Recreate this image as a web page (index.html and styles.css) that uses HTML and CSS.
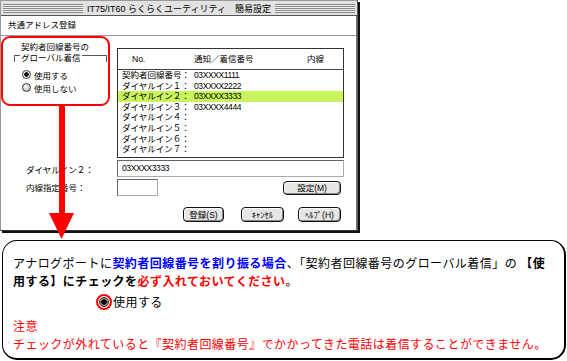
FILE: index.html
```html
<!DOCTYPE html>
<html>
<head>
    <title>IT75/IT60 簡易設定</title>
    <link rel="stylesheet" href="styles.css">
</head>
<body>
<div class="page">
    <div class="window">
        <div class="titlebar">
            <span class="stripes"></span>
            <span class="title">IT75/IT60 らくらくユーティリティ　簡易設定</span>
            <span class="stripes"></span>
        </div>
        <div class="client">
            <div class="heading">共通アドレス登録</div>
            <div class="panel">
                <!-- annotated group (red frame) -->
                <div class="mark-box">
                    <div class="caption">契約者回線番号の</div>
                    <div class="group-head">
                        <span class="tick-left"></span>
                        <span class="legend">グローバル着信</span>
                        <span class="tick-right"></span>
                    </div>
                    <div class="radios">
                        <div class="radio-row"><span class="radio on"></span>使用する</div>
                        <div class="radio-row"><span class="radio"></span>使用しない</div>
                    </div>
                </div>

                <div class="list">
                    <div class="list-head">
                        <span class="col-no">No.</span>
                        <span class="col-num">通知／着信番号</span>
                        <span>内線</span>
                    </div>
                    <div class="list-rows">
                        <div class="list-row"><span class="col-name">契約者回線番号：</span><span class="num">03XXXX1111</span></div>
                        <div class="list-row"><span class="col-name">ダイヤルイン１：</span><span class="num">03XXXX2222</span></div>
                        <div class="list-row selected"><span class="col-name">ダイヤルイン２：</span><span class="num">03XXXX3333</span></div>
                        <div class="list-row"><span class="col-name">ダイヤルイン３：</span><span class="num">03XXXX4444</span></div>
                        <div class="list-row"><span class="col-name">ダイヤルイン４：</span></div>
                        <div class="list-row"><span class="col-name">ダイヤルイン５：</span></div>
                        <div class="list-row"><span class="col-name">ダイヤルイン６：</span></div>
                        <div class="list-row"><span class="col-name">ダイヤルイン７：</span></div>
                    </div>
                </div>

                <div class="label label-dial">ダイヤルイン２：</div>
                <div class="field field-dial"><span class="num">03XXXX3333</span></div>

                <div class="label label-ext">内線指定番号：</div>
                <div class="ext-row">
                    <div class="field field-small"></div>
                    <button class="btn btn-set" type="button">設定(M)</button>
                </div>

                <div></div>
                <div class="buttons">
                    <button class="btn btn-ok" type="button">登録(S)</button>
                    <button class="btn btn-cancel" type="button">ｷｬﾝｾﾙ</button>
                    <button class="btn btn-help" type="button">ﾍﾙﾌﾟ(H)</button>
                </div>
            </div>
        </div>
    </div>

    <!-- red pointer from the group to the note -->
    <svg class="arrow" width="25" height="134" viewBox="0 0 25 134">
        <rect x="10" y="0" width="6" height="108" fill="#ff0000"/>
        <polygon points="0,107 25,107 12.5,133" fill="#ff0000"/>
    </svg>

    <div class="callout">
        <div class="line">アナログポートに<b class="blue">契約者回線番号を割り振る場合</b>、「契約者回線番号のグローバル着信」の <b>【使</b></div>
        <div class="line"><b>用する】にチェックを</b><b class="red">必ず入れておいてください</b>。</div>
        <div class="sample">
            <span class="ring"><span class="dot"></span></span>使用する
        </div>
        <div class="note red">注意</div>
        <div class="line red">チェックが外れていると『契約者回線番号』でかかってきた電話は着信することができません。</div>
    </div>
</div>
</body>
</html>
```

FILE: styles.css
```css
body {
    margin: 0;
    background: #fff;
    font-family: "Liberation Sans", "Noto Sans CJK JP", sans-serif;
    color: #000;
}
.page {
    position: relative;
    width: 567px;
    height: 361px;
}

/* window */
.window {
    width: 356px;
    border-left: 1px solid #999;
    border-right: 1px solid #555;
    border-bottom: 1px solid #333;
    box-shadow: 2px 2px 0 #111;
    background: #fff;
}
.titlebar {
    display: flex;
    align-items: center;
    height: 14px;
    border-top: 1px solid #999;
    border-bottom: 1px solid #555;
    background: #e2e2e2;
    padding: 0 2px;
}
.stripes {
    flex: 1;
    height: 9px;
    background: repeating-linear-gradient(to bottom, #888 0 1px, #f2f2f2 1px 2px);
}
.title {
    font-size: 9px;
    padding: 0 4px;
    white-space: nowrap;
}
.client {
    border-right: 1px solid #777;
    padding-bottom: 8px;
}
.heading {
    height: 19px;
    line-height: 19px;
    padding-left: 7px;
    font-size: 8.5px;
    border-bottom: 1px solid #999;
}
.panel {
    display: grid;
    grid-template-columns: 116px 227px;
    font-size: 8.5px;
}

/* red marked group */
.mark-box {
    box-sizing: border-box;
    width: 109px;
    height: 70px;
    border: 2px solid #ff0000;
    border-radius: 9px;
}
.caption {
    padding: 3px 0 0 18px;
    line-height: 12px;
}
.group-head {
    display: flex;
    align-items: flex-start;
    margin: -1px 1px 0 11px;
    height: 12px;
}
.tick-left, .tick-right {
    margin-top: 3px;
    height: 6px;
    border-top: 1px solid #555;
}
.tick-left {
    width: 5px;
    border-left: 1px solid #555;
}
.tick-right {
    flex: 1;
    margin-left: 2px;
    border-right: 1px solid #555;
}
.legend {
    line-height: 12px;
    padding-left: 1px;
}
.radios {
    padding: 4px 0 0 19px;
}
.radio-row {
    display: flex;
    align-items: center;
    height: 13px;
}
.radio {
    box-sizing: border-box;
    width: 9px;
    height: 9px;
    margin-right: 3px;
    border: 1px solid #333;
    border-radius: 50%;
    background: radial-gradient(circle at 35% 35%, #fff 0, #bbb 80%);
}
.radio.on {
    background: radial-gradient(circle, #000 0 2px, #fff 2.5px);
}

/* list */
.list {
    margin-top: 12px;
    height: 110px;
    box-sizing: border-box;
    border: 1px solid #333;
}
.list-head {
    display: flex;
    height: 20px;
    line-height: 20px;
    padding-left: 14px;
    border-bottom: 1px solid #444;
}
.col-no { width: 62px; }
.col-num { width: 113px; }
.list-row {
    display: flex;
    height: 10.6px;
    line-height: 10.6px;
    padding-left: 4px;
}
.list-row.selected {
    background: #c9f45c;
}
.col-name { width: 72px; }
.num {
    letter-spacing: -0.4px;
}

/* fields */
.label {
    padding-left: 25px;
    display: flex;
    align-items: center;
}
.field {
    box-sizing: border-box;
    height: 17px;
    border: 1px solid #666;
    border-right-color: #aaa;
    border-bottom-color: #aaa;
    line-height: 15px;
    padding-left: 4px;
}
.field-dial {
    margin-top: 2px;
}
.label-dial { margin-top: 2px; }
.ext-row {
    display: flex;
    align-items: center;
    margin-top: 2px;
}
.field-small {
    width: 41px;
}
.btn {
    box-sizing: border-box;
    height: 15px;
    padding: 0;
    font-family: "Liberation Sans", "Noto Sans CJK JP", sans-serif;
    font-size: 8.5px;
    line-height: 12px;
    color: #000;
    background: #e6e6e6;
    border: 1px solid #111;
    border-radius: 4px;
    box-shadow: inset -1px -1px 0 #888, inset 1px 1px 0 #fff;
}
.btn-set {
    width: 58px;
    height: 14px;
    margin: 1px 3px 0 auto;
}
.buttons {
    display: flex;
    justify-content: flex-end;
    margin-top: 11px;
    padding-right: 3px;
}
.btn-ok { width: 41px; }
.btn-cancel { width: 43px; margin-left: 17px; }
.btn-help { width: 43px; margin-left: 14px; }

/* pointer */
.arrow {
    position: absolute;
    left: 49px;
    top: 106px;
}

/* note */
.callout {
    box-sizing: border-box;
    width: 564px;
    margin: 9px 0 0 2px;
    padding: 13px 0 0 10px;
    height: 120px;
    border: 1px solid #000;
    border-right-width: 2px;
    border-bottom-width: 2px;
    border-radius: 15px;
    font-family: "Noto Sans CJK JP", sans-serif;
    font-size: 12px;
    letter-spacing: 0.45px;
    line-height: 18px;
}
.line {
    white-space: nowrap;
}
.blue { color: #0000ff; }
.red { color: #ff0000; }
.sample {
    display: flex;
    align-items: center;
    height: 18px;
    margin: 3px 0 0 83px;
}
.ring {
    box-sizing: border-box;
    display: flex;
    align-items: center;
    justify-content: center;
    width: 16px;
    height: 16px;
    margin-right: 1px;
    border: 2px solid #ff0000;
    border-radius: 50%;
}
.dot {
    box-sizing: border-box;
    width: 10px;
    height: 10px;
    border: 1px solid #222;
    border-radius: 50%;
    background: radial-gradient(circle, #000 0 2.5px, #999 3px);
}
.note {
    margin-top: 6px;
}
```
